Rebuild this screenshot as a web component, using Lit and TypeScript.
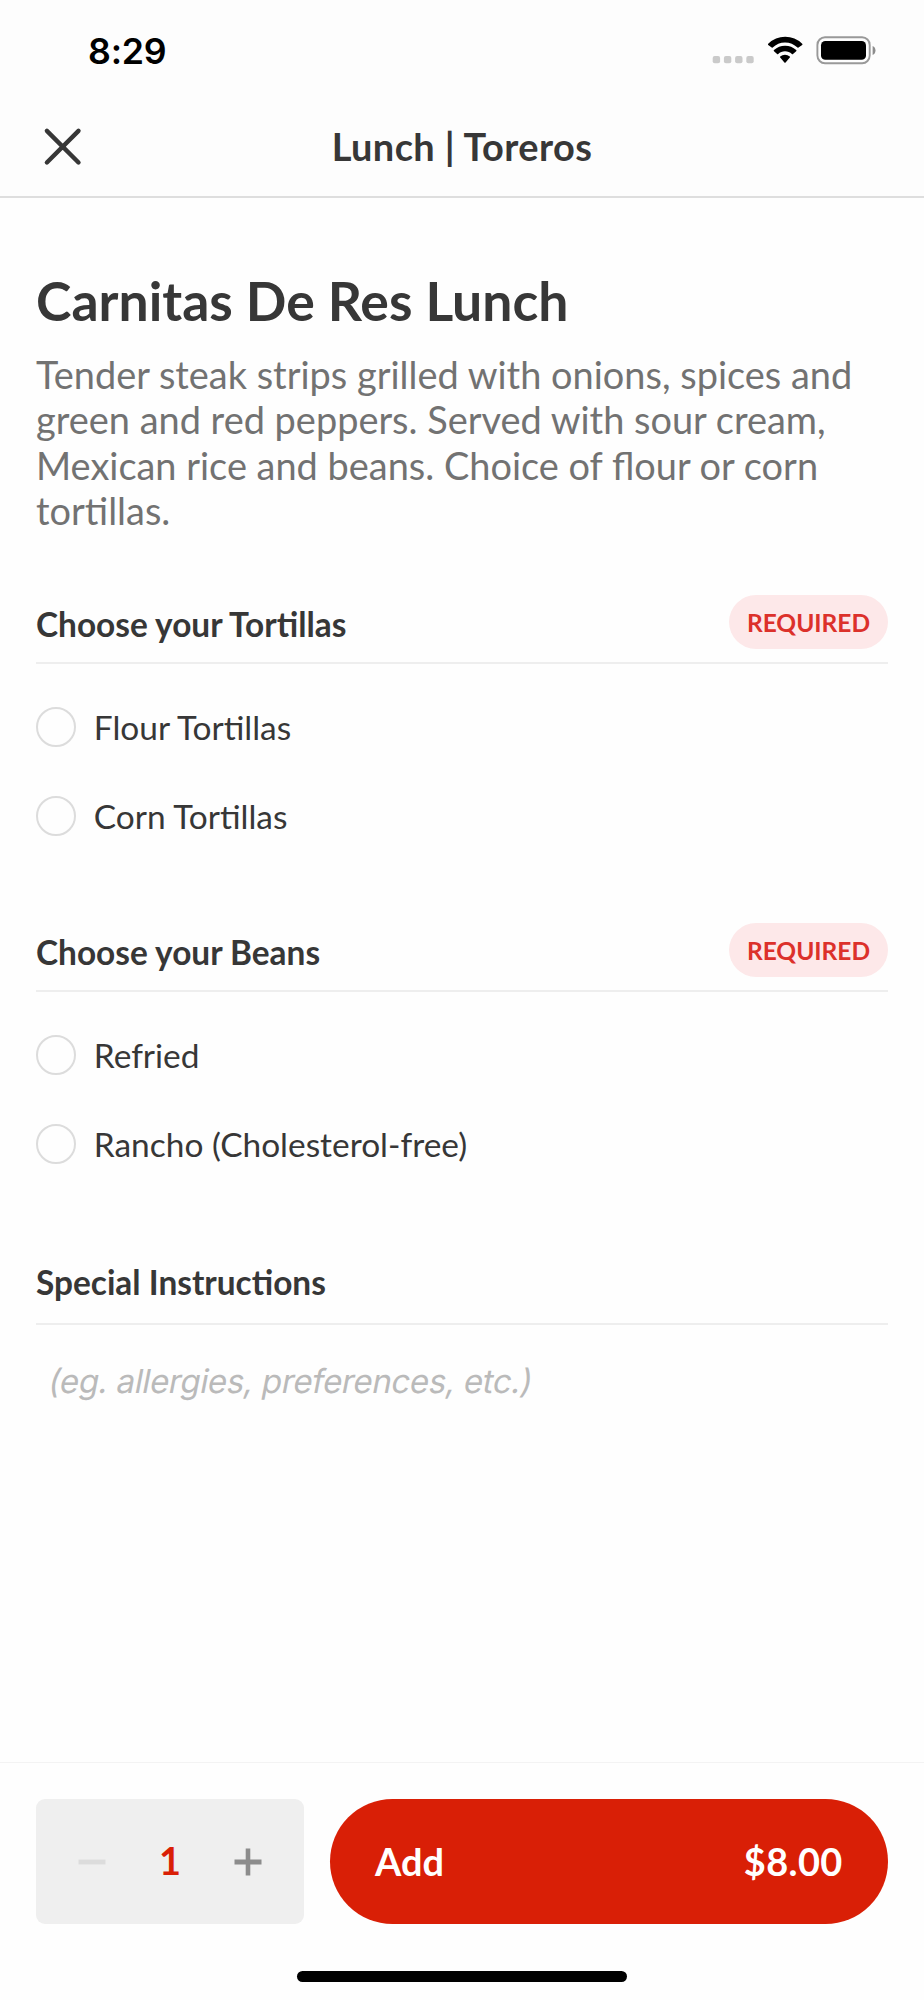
import { LitElement, html, css } from "lit";
import { customElement, property, state } from "lit/decorators.js";

@customElement("status-bar")
class StatusBar extends LitElement {
  static styles = css`
    :host { display: flex; height: 98px; box-sizing: border-box; justify-content: space-between; align-items: flex-start; padding: 0 48px 0 88px; color: #000; }
    .time { margin-top: 30px; font: 600 35.7px/43px Inter, sans-serif; letter-spacing: -0.2px; }
    .icons { display: block; margin-top: 34px; }
  `;
  render() {
    return html`
      <div class="time">8:29</div>
      <svg class="icons" width="166" height="32" viewBox="710 34 166 32">
        <g fill="#cacaca">
          <rect x="712.7" y="56" width="7.4" height="7.2" rx="2" />
          <rect x="723.9" y="56" width="7.4" height="7.2" rx="2" />
          <rect x="735.1" y="56" width="7.4" height="7.2" rx="2" />
          <rect x="746.3" y="56" width="7.4" height="7.2" rx="2" />
        </g>
        <path d="M785 42.500c4.800 0 9.100 1.900 12.500 5a.7.7 0 0 0 1 0l3.700-2.600a.8.8 0 0 0 0-1.200A25 25 0 0 0 785.200 36.800a25 25 0 0 0-17 6.900.8.8 0 0 0 0 1.200l3.500 2.600a.7.7 0 0 0 1 0c3.300-3.100 7.600-5 12.300-5z" />
        <path d="M785 51.300c2.600 0 5 1 6.900 2.700a.8.8 0 0 0 1.100 0l3.200-2.700a.8.8 0 0 0 0-1.200 16.300 16.300 0 0 0-22.200 0 .8.8 0 0 0 0 1.200l3.100 2.700a.8.8 0 0 0 1.100 0c1.800-1.700 4.200-2.700 6.800-2.700z" />
        <path d="M789.800 57.600a.8.8 0 0 0 0-1.200 7.500 7.500 0 0 0-9.600 0 .8.8 0 0 0 0 1.200l4.200 4.900a.8.8 0 0 0 1.200 0z" />
        <rect x="817.400" y="37.300" width="52.300" height="25.900" rx="7.600" fill="none" stroke="#999" stroke-width="1.900" />
        <rect x="821" y="41" width="45" height="18.800" rx="4.400" />
        <path d="M872.600 46v9c3.900-1.600 3.900-7.400 0-9z" fill="#8c8c8c" />
      </svg>`;
  }
}

@customElement("option-group")
class OptionGroup extends LitElement {
  @property() heading = "";
  @property({ attribute: false }) options: string[] = [];
  @state() selected = -1;
  static styles = css`
    :host { display: block; height: 328px; color: #373737; }
    .head { display: flex; justify-content: space-between; height: 67px; border-bottom: 2px solid #eee; }
    h2 { margin: 9px 0 0; font-size: 33.4px; line-height: 41px; font-weight: 700; }
    .badge { box-sizing: border-box; height: 54px; width: 159px; padding-top: 1px; border-radius: 27px; background: #fde8e9; color: #dc312b; font-size: 24.5px; line-height: 54px; font-weight: 700; text-align: center; }
    .list { display: flex; flex-direction: column; gap: 49px; padding-top: 43px; }
    .option { display: flex; align-items: center; gap: 17.8px; height: 40px; font-size: 33.45px; line-height: 40px; }
    .ring { box-sizing: border-box; width: 40px; height: 40px; border: 2px solid #dcdcdc; border-radius: 50%; }
    .ring.on { border: 12px solid #d91f06; }
  `;
  render() {
    return html`
      <div class="head"><h2>${this.heading}</h2><span class="badge">REQUIRED</span></div>
      <div class="list">
        ${this.options.map((o, i) => html`
          <div class="option" @click=${() => (this.selected = i)}>
            <span class="ring ${this.selected === i ? "on" : ""}"></span><span class="label">${o}</span>
          </div>`)}
      </div>`;
  }
}

@customElement("app-root")
class AppRoot extends LitElement {
  @state() count = 1;
  static styles = css`
    :host { display: flex; flex-direction: column; width: 924px; height: 2000px; background: #fefefe; color: #373737; font-family: Lato, sans-serif; overflow: hidden; }
    .top { background: #fdfdfd; border-bottom: 2px solid #dedede; height: 196px; }
    .nav { display: grid; grid-template-columns: 44px 1fr 44px; align-items: center; padding: 0 40px; height: 98px; }
    .nav svg { display: block; margin-bottom: 2px; }
    .nav .name { text-align: center; font-size: 37.95px; line-height: 46px; font-weight: 700; letter-spacing: 0.4px; }
    main { flex: 1; padding: 70px 36px 0; }
    h1 { margin: 0; font-size: 53.5px; line-height: 64px; font-weight: 700; }
    .desc { margin: 19.6px 0 61.4px; font-size: 37.93px; line-height: 45.6px; color: #727272; }
    .special { margin: 11px 0 0; height: 61px; font-size: 33.4px; line-height: 41px; font-weight: 700; border-bottom: 2px solid #eee; }
    .hint { margin: 31px 0 0 10.5px; font: 400 33px/50px Inter, sans-serif; letter-spacing: -0.37px; color: #bababa; transform: skewX(-11deg); transform-origin: 0 37px; }
    footer { border-top: 1px solid #f3f3f3; height: 237px; }
    .actions { display: flex; gap: 26px; padding: 36px 36px 0; }
    .stepper { display: grid; grid-template-columns: 1fr 1fr 1fr; align-items: center; justify-items: center; box-sizing: border-box; width: 268px; height: 125px; padding: 0 17px; border-radius: 9px; background: #efefef; }
    .count { padding-bottom: 2px; color: #d91f06; font-size: 37.95px; line-height: 46px; font-weight: 700; }
    .add { display: flex; flex: 1; justify-content: space-between; align-items: center; box-sizing: border-box; height: 125px; padding: 0 45.4px 0 45px; border-radius: 63px; background: #d91f06; color: #fff; font-size: 37.95px; line-height: 46px; font-weight: 700; }
    .price { letter-spacing: 0.35px; }
    .home { width: 330px; height: 11px; margin: 47px auto 0; border-radius: 6px; background: #000; }
  `;
  render() {
    return html`
      <div class="top">
        <status-bar></status-bar>
        <div class="nav">
          <svg width="44" height="44" viewBox="0 0 44 44" fill="none" stroke="#373737" stroke-width="4.400" stroke-linecap="round"><path d="M6.900 6.900l31.600 31.600M38.500 6.900L6.900 38.500" /></svg>
          <div class="name">Lunch | Toreros</div>
        </div>
      </div>
      <main>
        <h1>Carnitas De Res Lunch</h1>
        <p class="desc">Tender steak strips grilled with onions, spices and green and red peppers. Served with sour cream, Mexican rice and beans. Choice of flour or corn tortillas.</p>
        <option-group heading="Choose your Tortillas" .options=${["Flour Tortillas", "Corn Tortillas"]}></option-group>
        <option-group heading="Choose your Beans" .options=${["Refried", "Rancho (Cholesterol-free)"]}></option-group>
        <h2 class="special">Special Instructions</h2>
        <div class="hint">(eg. allergies, preferences, etc.)</div>
      </main>
      <footer>
        <div class="actions">
          <div class="stepper">
            <svg width="28" height="28" viewBox="0 0 28 28" @click=${() => (this.count = Math.max(1, this.count - 1))}><path d="M.5 11.600h27v4.800h-27z" fill="#dcdcdc" /></svg>
            <span class="count">${this.count}</span>
            <svg width="28" height="28" viewBox="0 0 28 28" @click=${() => this.count++}><path d="M.5 11.600h11.200V.5h4.600v11.100h11.200v4.800H16.300v11.100h-4.600V16.400H.5z" fill="#8c8c8c" /></svg>
          </div>
          <div class="add"><span>Add</span><span class="price">$${(8 * this.count).toFixed(2)}</span></div>
        </div>
        <div class="home"></div>
      </footer>`;
  }
}
